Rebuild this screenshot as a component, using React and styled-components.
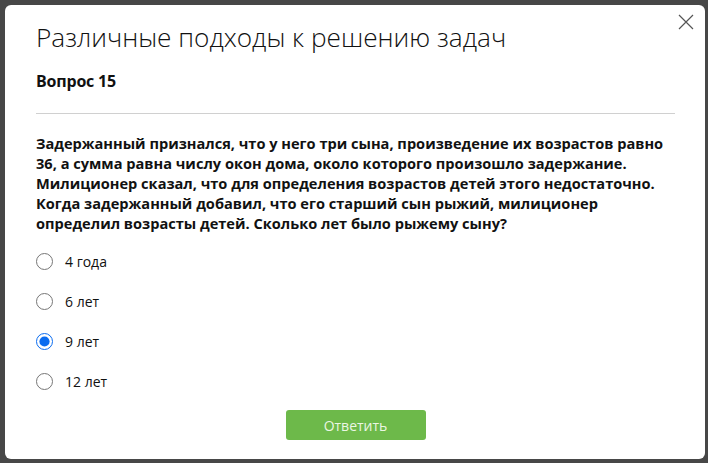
import React, { useState } from 'react';
import styled, { createGlobalStyle } from 'styled-components';

const GlobalStyle = createGlobalStyle`
  html, body {
    margin: 0;
    padding: 0;
    height: 100%;
    background: #474747;
    font-family: 'Open Sans', 'Liberation Sans', sans-serif;
    overflow: hidden;
  }
  #root {
    height: 100%;
  }
`;

const answers = ['4 года', '6 лет', '9 лет', '12 лет'];

const App = () => {
  const [selected, setSelected] = useState(2);

  return (
    <Overlay>
      <GlobalStyle />
      <Modal>
        <CloseButton aria-label="Закрыть">
          <svg width="16" height="16" viewBox="0 0 16 16">
            <path d="M1 1 L15 15 M15 1 L1 15" stroke="#555" strokeWidth="1.2" fill="none" />
          </svg>
        </CloseButton>
        <Title>Различные подходы к решению задач</Title>
        <QuestionNumber>Вопрос 15</QuestionNumber>
        <Divider />
        <QuestionText>
          Задержанный признался, что у него три сына, произведение их возрастов равно
          36, а сумма равна числу окон дома, около которого произошло задержание.
          Милиционер сказал, что для определения возрастов детей этого недостаточно.
          Когда задержанный добавил, что его старший сын рыжий, милиционер
          определил возрасты детей. Сколько лет было рыжему сыну?
        </QuestionText>
        <Answers>
          {answers.map((text, i) => (
            <Answer key={text}>
              <Radio
                type="radio"
                name="answer"
                checked={selected === i}
                onChange={() => setSelected(i)}
              />
              <AnswerText>{text}</AnswerText>
            </Answer>
          ))}
        </Answers>
        <Footer>
          <SubmitButton>Ответить</SubmitButton>
        </Footer>
      </Modal>
    </Overlay>
  );
};

const Overlay = styled.div`
  height: 100%;
  box-sizing: border-box;
  padding: 5px 3px 4px 5px;
`;

const Modal = styled.div`
  position: relative;
  height: 100%;
  box-sizing: border-box;
  background: #fff;
  border-radius: 6px;
  padding: 18px 30px 0 31px;
  display: flex;
  flex-direction: column;
`;

const CloseButton = styled.button`
  position: absolute;
  top: 9px;
  right: 11px;
  border: none;
  background: none;
  padding: 0;
  width: 16px;
  height: 16px;
  cursor: pointer;
`;

const Title = styled.h1`
  margin: 0;
  font-size: 26.2px;
  font-weight: 300;
  color: #111;
  line-height: 28px;
`;

const QuestionNumber = styled.h2`
  margin: 19px 0 0;
  font-size: 16px;
  font-weight: 700;
  letter-spacing: -0.2px;
  color: #111;
  line-height: 22px;
`;

const Divider = styled.div`
  margin-top: 21px;
  height: 1px;
  background: #d0d0d0;
`;

const QuestionText = styled.p`
  margin: 19px 0 0;
  padding-right: 4px;
  font-size: 14.6px;
  font-weight: 700;
  line-height: 20px;
  color: #111;
`;

const Answers = styled.div`
  margin-top: 18px;
  display: flex;
  flex-direction: column;
  gap: 20px;
`;

const Answer = styled.label`
  display: flex;
  align-items: center;
  gap: 12px;
  height: 20px;
  cursor: pointer;
`;

const Radio = styled.input`
  margin: 0;
  width: 17px;
  height: 17px;
  accent-color: #0a6cf0;
`;

const AnswerText = styled.span`
  font-size: 14px;
  color: #111;
`;

const Footer = styled.div`
  margin-top: 19px;
  display: flex;
  justify-content: center;
`;

const SubmitButton = styled.button`
  width: 140px;
  height: 30px;
  border: none;
  border-radius: 3px;
  background: #6db94a;
  color: #eaf6e3;
  font-family: 'Open Sans', 'Liberation Sans', sans-serif;
  font-size: 14px;
  cursor: pointer;
`;

export default App;
